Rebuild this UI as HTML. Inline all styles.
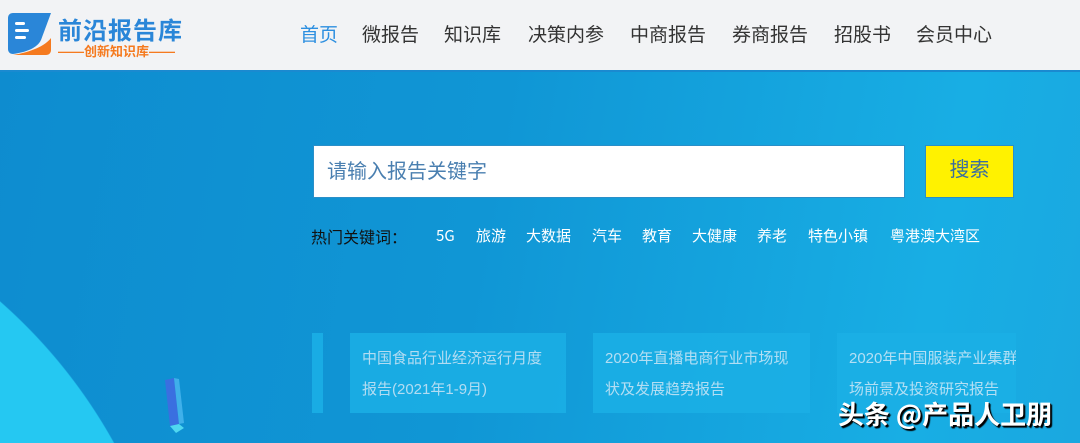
<!DOCTYPE html>
<html><head><meta charset="utf-8"><style>
*{margin:0;padding:0;box-sizing:border-box}
html,body{width:1080px;height:443px;overflow:hidden}
body{position:relative;font-family:"Liberation Sans","Noto Sans CJK SC",sans-serif;background:radial-gradient(circle 531px at -350px 700px,#25c8f2 99.8%,transparent 100%),linear-gradient(100deg,#0e8ccf 0%,#1096d5 45%,#18aee4 85%,#1aa8e0 100%)}
.hdr{position:absolute;left:0;top:0;width:1080px;height:72px;background:#f2f3f5;border-bottom:2px solid #1a8ad0}
.nav{position:absolute;top:20px;font-size:19px;color:#333;white-space:nowrap}
.nav span{position:absolute}
.input{position:absolute;left:313px;top:145px;width:592px;height:53px;background:#fff;border:1px solid #2a8fc8;font-size:20px;color:#4a7fb0;padding:9px 0 0 13px}
.btn{position:absolute;left:925px;top:145px;width:89px;height:53px;background:#fff200;border:1px solid #2a8fc8;font-size:20px;color:#3b6e9e;text-align:center;line-height:49px}
.kw{position:absolute;top:226px;height:20px;line-height:20px;font-size:15px;color:#fff;white-space:nowrap;font-family:"Noto Sans CJK SC",sans-serif}
.card{position:absolute;top:333px;height:80px;background:#1bb0e6;opacity:.85;color:#cfe9f8;font-size:15px;line-height:31px;padding:10px 0 0 12px;overflow:hidden;white-space:nowrap}
</style></head><body>
<div class="hdr">
<svg style="position:absolute;left:7px;top:12px" width="46" height="44" viewBox="0 0 46 44"><path d="M6 1H44L34 28 C30 36 20 40 6 42 C3 42 1 40 1 37V6C1 3 3 1 6 1Z" fill="#2a86d8"/><path d="M44 26V38C44 41 42 43 39 43H6C24 40 38 34 44 26Z" fill="#f57a1f"/><rect x="8" y="10" width="10" height="3" rx="1.5" fill="#fff"/><rect x="8" y="17" width="14" height="3" rx="1.5" fill="#fff"/><rect x="8" y="24" width="11" height="3" rx="1.5" fill="#fff"/></svg>
<div style="position:absolute;left:58px;top:11px;font-size:24px;font-weight:bold;color:#2a86d8;letter-spacing:1px">前沿报告库</div>
<div style="position:absolute;left:58px;top:41px;font-size:13px;font-weight:bold;color:#f57a1f;white-space:nowrap">——创新知识库——</div>
<div class="nav"><span style="left:300px;color:#2d8fe0">首页</span><span style="left:362px">微报告</span><span style="left:444px">知识库</span><span style="left:528px">决策内参</span><span style="left:630px">中商报告</span><span style="left:732px">券商报告</span><span style="left:834px">招股书</span><span style="left:916px">会员中心</span></div>
</div>
<div class="input">请输入报告关键字</div>
<div class="btn">搜索</div>
<div class="kw" style="left:311px;color:#111;font-size:16px">热门关键词：</div>
<div class="kw" style="left:436px">5G</div><div class="kw" style="left:476px">旅游</div><div class="kw" style="left:526px">大数据</div><div class="kw" style="left:592px">汽车</div><div class="kw" style="left:642px">教育</div><div class="kw" style="left:692px">大健康</div><div class="kw" style="left:757px">养老</div><div class="kw" style="left:808px">特色小镇</div><div class="kw" style="left:890px">粤港澳大湾区</div>
<div class="card" style="left:312px;width:11px;padding:0"></div>
<div class="card" style="left:350px;width:216px">中国食品行业经济运行月度<br>报告(2021年1-9月)</div>
<div class="card" style="left:593px;width:217px">2020年直播电商行业市场现<br>状及发展趋势报告</div>
<div class="card" style="left:837px;width:179px">2020年中国服装产业集群<br>场前景及投资研究报告</div>
<svg style="position:absolute;left:162px;top:376px" width="32" height="62" viewBox="0 0 32 62"><path d="M3 4L12 2 17 48 8 50Z" fill="#3a6fe0"/><path d="M12 2L17 3 22 47 17 48Z" fill="#3fb0ea"/><path d="M8 50L17 48 22 52 14 57Z" fill="#4fd7f0"/></svg>
<div style="position:absolute;left:838px;top:396px;font-size:26px;line-height:36px;font-weight:bold;color:#fff;text-shadow:1px 1px 0 #000,2px 2px 1px #000;white-space:nowrap;font-family:'Noto Sans CJK SC',sans-serif">头条 @产品人卫朋</div>
</body></html>
